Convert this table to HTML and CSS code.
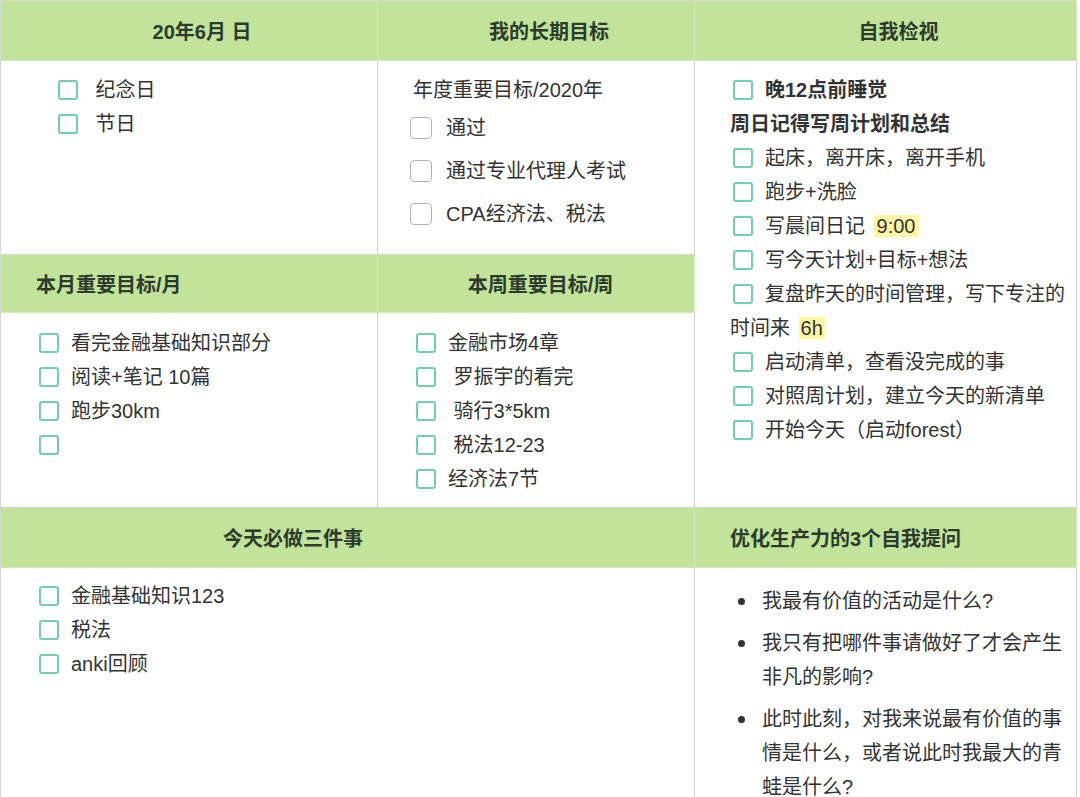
FILE: index.html
```html
<!DOCTYPE html>
<html lang="zh-CN">
<head>
<meta charset="utf-8">
<title>计划表</title>
<link rel="stylesheet" href="styles.css">
</head>
<body>
<div class="sheet">
  <div class="cell head center">20年6月 日</div>
  <div class="cell head center">我的长期目标</div>
  <div class="cell head center">自我检视</div>

  <div class="cell body first indent">
    <p class="line"><span class="cb"></span>&nbsp;纪念日</p>
    <p class="line"><span class="cb"></span>&nbsp;节日</p>
  </div>

  <div class="cell body first">
    <p class="line">年度重要目标/2020年</p>
    <p class="line tall"><span class="cb gray"></span>通过</p>
    <p class="line tall"><span class="cb gray"></span>通过专业代理人考试</p>
    <p class="line tall"><span class="cb gray"></span>CPA经济法、税法</p>
  </div>

  <div class="cell body first review">
    <p class="line strong"><span class="cb"></span>晚12点前睡觉</p>
    <p class="line strong">周日记得写周计划和总结</p>
    <p class="line"><span class="cb"></span>起床，离开床，离开手机</p>
    <p class="line"><span class="cb"></span>跑步+洗脸</p>
    <p class="line"><span class="cb"></span>写晨间日记 <span class="hl">9:00</span></p>
    <p class="line"><span class="cb"></span>写今天计划+目标+想法</p>
    <p class="line"><span class="cb"></span><span>复盘昨天的时间管理，写下专注的</span><span>时间来</span> <span class="hl small">6h</span></p>
    <p class="line"><span class="cb"></span>启动清单，查看没完成的事</p>
    <p class="line"><span class="cb"></span>对照周计划，建立今天的新清单</p>
    <p class="line"><span class="cb"></span>开始今天（启动forest）</p>
  </div>

  <div class="cell head">本月重要目标/月</div>
  <div class="cell head center week">本周重要目标/周</div>

  <div class="cell body second">
    <p class="line"><span class="cb"></span>看完金融基础知识部分</p>
    <p class="line"><span class="cb"></span>阅读+笔记 10篇</p>
    <p class="line"><span class="cb"></span>跑步30km</p>
    <p class="line"><span class="cb"></span></p>
  </div>

  <div class="cell body second">
    <p class="line"><span class="cb"></span>金融市场4章</p>
    <p class="line"><span class="cb"></span>&nbsp;罗振宇的看完</p>
    <p class="line"><span class="cb"></span>&nbsp;骑行3*5km</p>
    <p class="line"><span class="cb"></span>&nbsp;税法12-23</p>
    <p class="line"><span class="cb"></span>经济法7节</p>
  </div>

  <div class="cell head wide today">今天必做三件事</div>
  <div class="cell head">优化生产力的3个自我提问</div>

  <div class="cell body third wide">
    <p class="line"><span class="cb"></span>金融基础知识123</p>
    <p class="line"><span class="cb"></span>税法</p>
    <p class="line"><span class="cb"></span>anki回顾</p>
  </div>

  <div class="cell body third questions">
    <ul class="qlist">
      <li class="q"><span class="dot"></span><span class="qtext">我最有价值的活动是什么?</span></li>
      <li class="q"><span class="dot"></span><span class="qtext">我只有把哪件事请做好了才会产生非凡的影响?</span></li>
      <li class="q"><span class="dot"></span><span class="qtext">此时此刻，对我来说最有价值的事情是什么，或者说此时我最大的青蛙是什么?</span></li>
    </ul>
  </div>
</div>
</body>
</html>
```

FILE: styles.css
```css
* { box-sizing: border-box; }

html, body {
  margin: 0;
  padding: 0;
  background: #ffffff;
}

body {
  font-family: "Liberation Sans", "Noto Sans CJK SC", sans-serif;
  font-size: 20px;
  color: #333333;
}

.sheet {
  display: grid;
  width: 1077px;
  grid-template-columns: 377px 317px 382px;
  grid-template-rows: 60px 194px 58px 195px 60px auto;
  border-top: 1px solid #d8d8d8;
  border-left: 1px solid #d8d8d8;
}

.cell {
  border-right: 1px solid #d6d6d6;
  border-bottom: 1px solid #d6d6d6;
  padding: 0 9px 0 35px;
}

.head {
  background: #c1e49a;
  border-color: #d0ebb6;
  font-weight: 700;
  color: #2d3a2e;
  display: flex;
  align-items: center;
}

.head.center { justify-content: center; }
.head.week { padding-left: 18px; }
.head.today { padding-left: 222px; }

.wide { grid-column: span 2; }
.review { grid-row: span 3; }

.body.first { padding-top: 12px; }
.body.second { padding-top: 13px; }
.body.third { padding-top: 11px; }
.body.indent { padding-left: 54px; }
.body.questions { padding-top: 16px; }

.line {
  margin: 0;
  line-height: 34px;
}

.line.tall { line-height: 43px; }

.strong { font-weight: 700; }

.cb {
  display: inline-block;
  width: 20px;
  height: 20px;
  margin: 0 12px 0 3px;
  border: 2px solid #72cdb2;
  border-radius: 3px;
  background: #ffffff;
  vertical-align: -3px;
}

.cb.gray {
  width: 22px;
  height: 22px;
  margin: 0 14px 0 -3px;
  border: 1px solid #b3b3b3;
  border-radius: 4px;
  vertical-align: -4px;
}

.hl {
  background: #fff6a6;
  padding: 0 3px;
  margin-left: 3px;
}

.hl.small { padding: 0 2px; }

.qlist {
  margin: 0;
  padding: 0;
  list-style: none;
}

.q {
  display: flex;
  align-items: flex-start;
  line-height: 34px;
  margin-bottom: 8px;
}

.dot {
  flex: none;
  width: 7px;
  height: 7px;
  margin: 14px 17px 0 8px;
  border-radius: 50%;
  background: #333333;
}

.qtext { flex: 1; }
```
